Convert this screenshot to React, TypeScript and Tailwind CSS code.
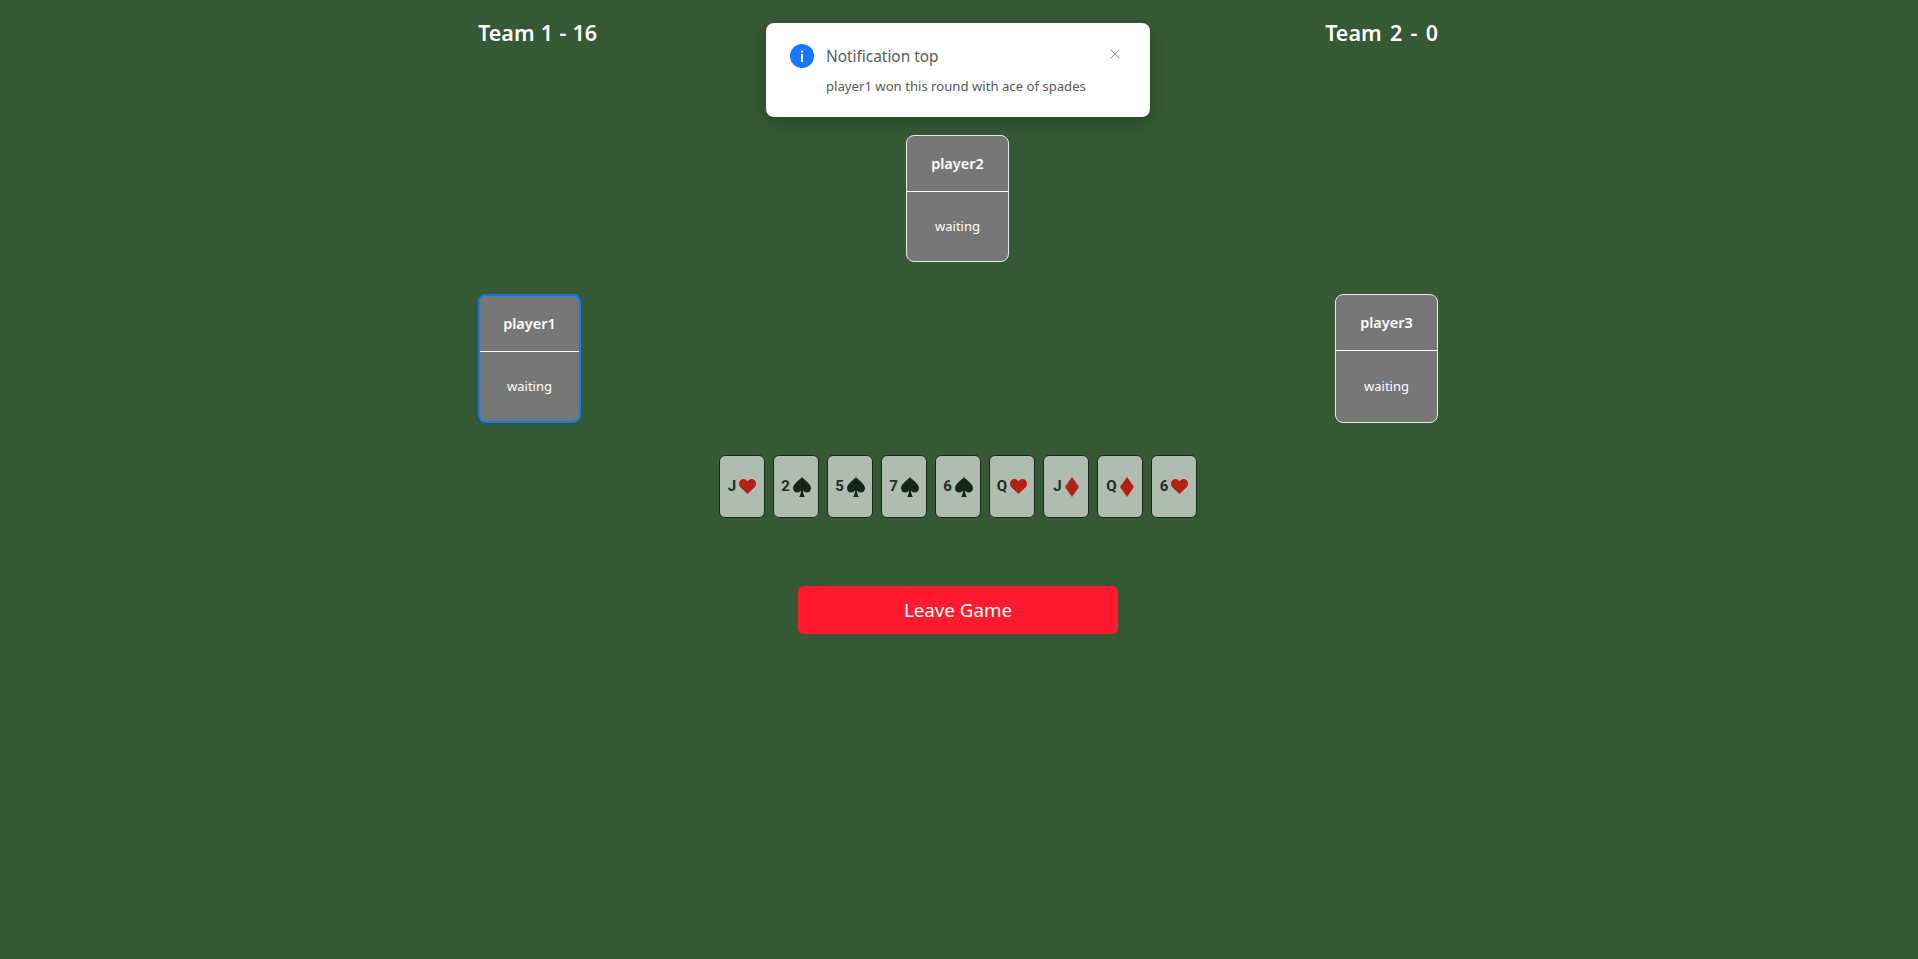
import { X } from 'lucide-react'

const hand = [
  { rank: 'J', suit: 'hearts' },
  { rank: '2', suit: 'spades' },
  { rank: '5', suit: 'spades' },
  { rank: '7', suit: 'spades' },
  { rank: '6', suit: 'spades' },
  { rank: 'Q', suit: 'hearts' },
  { rank: 'J', suit: 'diamonds' },
  { rank: 'Q', suit: 'diamonds' },
  { rank: '6', suit: 'hearts' },
]

function SuitIcon({ suit }: { suit: string }) {
  if (suit === 'hearts')
    return (
      <svg viewBox="0 0 17 15" className="h-[15px] w-[17px] shrink-0 fill-[#b02114]">
        <path d="M8.5 15 1.4 8.2C-.5 6.3-.4 3 1.3 1.4 3.2-.5 6.4-.4 8.5 2.4 10.6-.4 13.8-.5 15.7 1.4c1.7 1.6 1.8 4.9-.1 6.8L8.5 15Z" />
      </svg>
    )
  if (suit === 'diamonds')
    return (
      <svg viewBox="0 0 14 20" className="h-[20px] w-[14px] shrink-0 fill-[#b02114]">
        <path d="M7 0 14 10 7 20 0 10 7 0Z" />
      </svg>
    )
  return (
    <svg viewBox="0 0 18 20" className="h-[20px] w-[18px] shrink-0 fill-[#14261a]">
      <path d="M9 0C11 3 18 6.500 18 11.200 18 14 15.900 15.500 13.800 15.500 12.300 15.500 11 14.800 10 13.600 10.100 16 10.600 18 11.800 20H6.200C7.400 18 7.900 16 8 13.600 7 14.800 5.700 15.500 4.200 15.500 2.100 15.500 0 14 0 11.200 0 6.500 7 3 9 0Z" />
    </svg>
  )
}

function PlayerCard({ name, active, tall }: { name: string; active?: boolean; tall?: boolean }) {
  return (
    <div
      className={`flex w-[103px] flex-col rounded-[8px] bg-[#777777] text-white ${tall ? 'h-[129px]' : 'h-[127px]'} ${
        active ? 'border-2 border-[#0a7cf5]' : 'border border-[#e8e8e8]'
      }`}
    >
      <div className="flex h-[56px] items-center justify-center border-b border-white pt-[1px] text-[14.5px] font-semibold">{name}</div>
      <div className="flex flex-1 items-center justify-center text-[13px]">waiting</div>
    </div>
  )
}

export default function App() {
  return (
    <div className="relative min-h-screen bg-[#345934] font-['Noto_Sans',sans-serif]">
      {/* Notification */}
      <div className="absolute left-[766px] top-[23px] h-[94px] w-[384px] rounded-[8px] bg-white px-6 pt-[20px] shadow-[0_6px_16px_rgba(0,0,0,0.2)]">
        <div className="flex items-start justify-between">
          <div className="flex items-center gap-3">
            <svg viewBox="0 0 24 24" className="h-6 w-6">
              <circle cx="12" cy="12" r="12" fill="#1677ff" />
              <rect x="11" y="10" width="2" height="8" fill="#fff" />
              <rect x="11" y="6.500" width="2" height="2" fill="#fff" />
            </svg>
            <span className="pt-[2px] text-[15.4px] text-[#5a5a5a]">Notification top</span>
          </div>
          <X className="mr-[3px] mt-[3px] h-4 w-4 text-[#888888]" strokeWidth={1.5} />
        </div>
        <p className="ml-[36px] mt-[9px] text-[13.15px] text-[#5a5a5a]">player1 won this round with ace of spades</p>
      </div>

      <div className="ml-[478px] flex w-[960px] flex-col pt-[19px]">
        {/* Scores */}
        <div className="flex justify-between text-[21.5px] font-semibold leading-[28px] text-white">
          <span className="[word-spacing:0.7px]">Team 1 - 16</span>
          <span className="[word-spacing:2.7px]">Team 2 - 0</span>
        </div>

        {/* Table */}
        <div className="mt-[88px] flex justify-center pr-[1px]">
          <PlayerCard name="player2" />
        </div>
        <div className="mt-[32px] flex justify-between">
          <PlayerCard name="player1" active tall />
          <PlayerCard name="player3" tall />
        </div>

        {/* Hand */}
        <div className="mt-[32px] flex justify-center gap-[8px]">
          {hand.map((card, i) => (
            <div
              key={i}
              className="flex h-[63px] w-[46px] items-center justify-center gap-[3px] rounded-[6px] border border-[#16281a] bg-[#afbdb0] font-['Roboto',sans-serif] text-[15px] font-bold text-[#1d2e22]"
            >
              <span>{card.rank}</span>
              <SuitIcon suit={card.suit} />
            </div>
          ))}
        </div>

        {/* Leave */}
        <div className="mt-[68px] flex justify-center">
          <button className="h-[48px] w-[320px] rounded-[6px] bg-[#ff1a2e] text-[18.75px] text-white">Leave Game</button>
        </div>
      </div>
    </div>
  )
}
